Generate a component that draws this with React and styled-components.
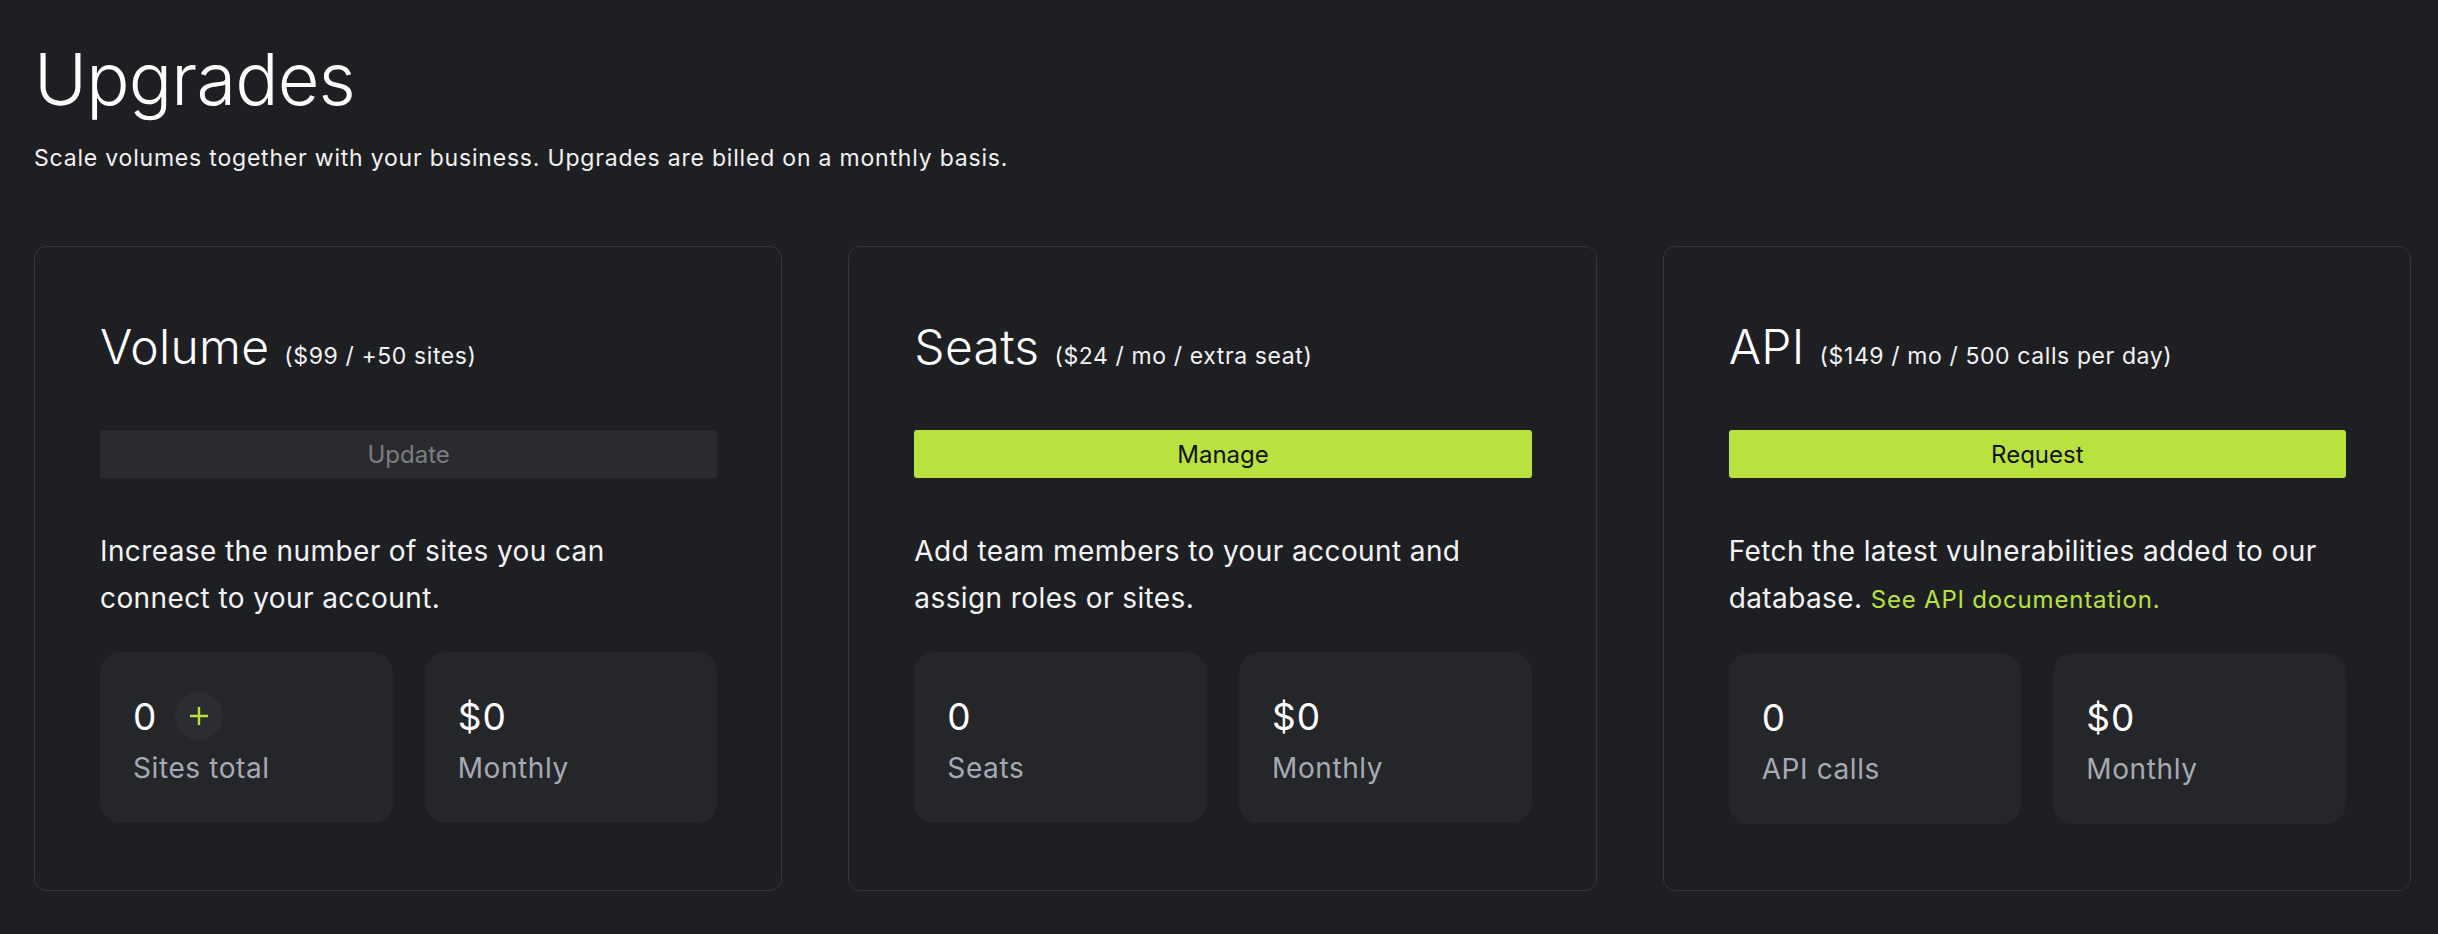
import React from 'react'
import styled, { createGlobalStyle } from 'styled-components'

const GlobalStyle = createGlobalStyle`
  html, body {
    margin: 0;
    background: #1e1f23;
  }
  body {
    font-family: Inter, 'Noto Sans', sans-serif;
    color: #ffffff;
  }
`

const Page = styled.div`
  padding: 35px 27px 40px 34px;
  min-height: 934px;
  box-sizing: border-box;
`

const Heading = styled.h1`
  margin: 0;
  font-size: 72px;
  font-weight: 300;
  letter-spacing: -0.8px;
  line-height: 88px;
`

const Intro = styled.p`
  margin: 20px 0 0;
  font-size: 23px;
  line-height: 30px;
  letter-spacing: 0.8px;
  color: #f2f2f2;
`

const Cards = styled.div`
  display: grid;
  grid-template-columns: repeat(3, 1fr);
  column-gap: 66px;
  margin-top: 73px;
`

const Card = styled.div`
  border: 1.5px solid #34363b;
  border-radius: 12px;
  padding: 72px 64px 66px 65px;
`

const TitleRow = styled.div`
  display: flex;
  align-items: baseline;
  gap: 15px;
`

const Title = styled.h2`
  margin: 0;
  font-size: 48px;
  font-weight: 300;
  line-height: 56px;
  letter-spacing: 0.3px;
`

const Price = styled.span`
  font-size: 23px;
  letter-spacing: 0.6px;
  color: #f2f2f2;
`

const ActionButton = styled.button`
  display: block;
  width: 100%;
  height: 48px;
  margin-top: 55px;
  border: none;
  border-radius: 3px;
  font-family: inherit;
  font-size: 24px;
  background: ${(p) => (p.$active ? '#b9e23f' : '#2a2b2e')};
  color: ${(p) => (p.$active ? '#111214' : '#7c7d80')};
`

const Description = styled.p`
  margin: 50px 0 0;
  font-size: 28px;
  line-height: 47px;
  color: #f4f4f4;
  letter-spacing: 0.4px;
`

const DocLink = styled.a`
  font-size: 24px;
  letter-spacing: 0.8px;
  color: #b9e23f;
  text-decoration: none;
`

const Stats = styled.div`
  display: grid;
  grid-template-columns: 1fr 1fr;
  gap: 32px;
  margin-top: 30px;
`

const StatBox = styled.div`
  background: #25262a;
  border-radius: 20px;
  padding: 40px 33px 38px;
`

const ValueRow = styled.div`
  display: flex;
  align-items: center;
  gap: 18px;
  height: 48px;
`

const Value = styled.span`
  font-size: 37px;
  font-weight: 400;
  letter-spacing: 1px;
`

const AddButton = styled.button`
  width: 48px;
  height: 48px;
  border: none;
  border-radius: 50%;
  background: #2b2d31;
  display: flex;
  align-items: center;
  justify-content: center;
  padding: 0;
`

const Label = styled.div`
  margin-top: 11px;
  font-size: 28px;
  line-height: 34px;
  letter-spacing: 0.6px;
  color: #a5aab4;
`

const Plus = () => (
  <svg width="22" height="22" viewBox="0 0 22 22">
    <path d="M11 2v18M2 11h18" stroke="#b9e23f" strokeWidth="2.4" />
  </svg>
)

const upgrades = [
  {
    title: 'Volume',
    price: '($99 / +50 sites)',
    action: 'Update',
    active: false,
    text: 'Increase the number of sites you can connect to your account.',
    stat: 'Sites total',
    canAdd: true,
  },
  {
    title: 'Seats',
    price: '($24 / mo / extra seat)',
    action: 'Manage',
    active: true,
    text: 'Add team members to your account and assign roles or sites.',
    stat: 'Seats',
  },
  {
    title: 'API',
    price: '($149 / mo / 500 calls per day)',
    action: 'Request',
    active: true,
    text: 'Fetch the latest vulnerabilities added to our database.',
    link: 'See API documentation.',
    stat: 'API calls',
  },
]

const App = () => {
  return (
    <Page>
      <GlobalStyle />
      <Heading>Upgrades</Heading>
      <Intro>
        Scale volumes together with your business. Upgrades are billed on a
        monthly basis.
      </Intro>
      <Cards>
        {upgrades.map((u) => (
          <Card key={u.title}>
            <TitleRow>
              <Title>{u.title}</Title>
              <Price>{u.price}</Price>
            </TitleRow>
            <ActionButton $active={u.active}>{u.action}</ActionButton>
            <Description>
              {u.text}
              {u.link && (
                <>
                  {' '}
                  <DocLink href="#">{u.link}</DocLink>
                </>
              )}
            </Description>
            <Stats>
              <StatBox>
                <ValueRow>
                  <Value>0</Value>
                  {u.canAdd && (
                    <AddButton>
                      <Plus />
                    </AddButton>
                  )}
                </ValueRow>
                <Label>{u.stat}</Label>
              </StatBox>
              <StatBox>
                <ValueRow>
                  <Value>$0</Value>
                </ValueRow>
                <Label>Monthly</Label>
              </StatBox>
            </Stats>
          </Card>
        ))}
      </Cards>
    </Page>
  )
}

export default App
